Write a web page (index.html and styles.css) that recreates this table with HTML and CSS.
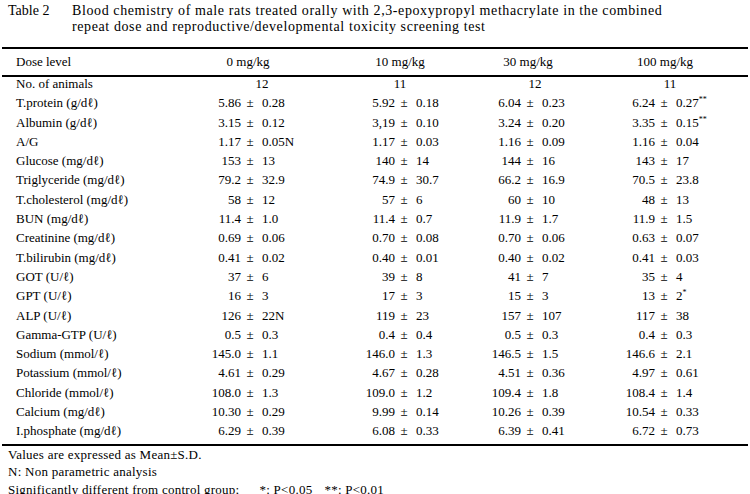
FILE: index.html
```html
<!DOCTYPE html>
<html>
<head>
<meta charset="utf-8">
<link rel="stylesheet" href="styles.css">
</head>
<body>
<div class="caption">
  <span class="tno">Table 2</span>
  <div class="ctext">Blood chemistry of male rats treated orally with 2,3-epoxypropyl methacrylate in the combined<br>repeat dose and reproductive/developmental toxicity screening test</div>
</div>
<table class="data">
  <colgroup>
    <col class="c-lbl">
    <col class="c1m"><col class="cpm"><col class="c1s">
    <col class="c2m"><col class="cpm"><col class="c2s">
    <col class="c3m"><col class="cpm"><col class="c3s">
    <col class="c4m"><col class="cpm"><col class="c4s">
  </colgroup>
  <thead>
    <tr>
      <th class="lbl">Dose level</th>
      <th colspan="3" class="h1">0 mg/kg</th>
      <th colspan="3">10 mg/kg</th>
      <th colspan="3" class="h3">30 mg/kg</th>
      <th colspan="3" class="h4">100 mg/kg</th>
    </tr>
  </thead>
  <tbody>
    <tr class="cnt"><td class="lbl">No. of animals</td><td colspan="3">12</td><td colspan="3">11</td><td colspan="3" class="n3">12</td><td colspan="3" class="n4">11</td></tr>
    <tr><td class="lbl">T.protein (g/dℓ)</td><td class="m">5.86</td><td class="pm">±</td><td class="s">0.28</td><td class="m">5.92</td><td class="pm">±</td><td class="s">0.18</td><td class="m">6.04</td><td class="pm">±</td><td class="s">0.23</td><td class="m">6.24</td><td class="pm">±</td><td class="s">0.27<sup>**</sup></td></tr>
    <tr><td class="lbl">Albumin (g/dℓ)</td><td class="m">3.15</td><td class="pm">±</td><td class="s">0.12</td><td class="m">3,19</td><td class="pm">±</td><td class="s">0.10</td><td class="m">3.24</td><td class="pm">±</td><td class="s">0.20</td><td class="m">3.35</td><td class="pm">±</td><td class="s">0.15<sup>**</sup></td></tr>
    <tr><td class="lbl">A/G</td><td class="m">1.17</td><td class="pm">±</td><td class="s">0.05N</td><td class="m">1.17</td><td class="pm">±</td><td class="s">0.03</td><td class="m">1.16</td><td class="pm">±</td><td class="s">0.09</td><td class="m">1.16</td><td class="pm">±</td><td class="s">0.04</td></tr>
    <tr><td class="lbl">Glucose (mg/dℓ)</td><td class="m">153</td><td class="pm">±</td><td class="s">13</td><td class="m">140</td><td class="pm">±</td><td class="s">14</td><td class="m">144</td><td class="pm">±</td><td class="s">16</td><td class="m">143</td><td class="pm">±</td><td class="s">17</td></tr>
    <tr><td class="lbl">Triglyceride (mg/dℓ)</td><td class="m">79.2</td><td class="pm">±</td><td class="s">32.9</td><td class="m">74.9</td><td class="pm">±</td><td class="s">30.7</td><td class="m">66.2</td><td class="pm">±</td><td class="s">16.9</td><td class="m">70.5</td><td class="pm">±</td><td class="s">23.8</td></tr>
    <tr><td class="lbl">T.cholesterol (mg/dℓ)</td><td class="m">58</td><td class="pm">±</td><td class="s">12</td><td class="m">57</td><td class="pm">±</td><td class="s">6</td><td class="m">60</td><td class="pm">±</td><td class="s">10</td><td class="m">48</td><td class="pm">±</td><td class="s">13</td></tr>
    <tr><td class="lbl">BUN (mg/dℓ)</td><td class="m">11.4</td><td class="pm">±</td><td class="s">1.0</td><td class="m">11.4</td><td class="pm">±</td><td class="s">0.7</td><td class="m">11.9</td><td class="pm">±</td><td class="s">1.7</td><td class="m">11.9</td><td class="pm">±</td><td class="s">1.5</td></tr>
    <tr><td class="lbl">Creatinine (mg/dℓ)</td><td class="m">0.69</td><td class="pm">±</td><td class="s">0.06</td><td class="m">0.70</td><td class="pm">±</td><td class="s">0.08</td><td class="m">0.70</td><td class="pm">±</td><td class="s">0.06</td><td class="m">0.63</td><td class="pm">±</td><td class="s">0.07</td></tr>
    <tr><td class="lbl">T.bilirubin (mg/dℓ)</td><td class="m">0.41</td><td class="pm">±</td><td class="s">0.02</td><td class="m">0.40</td><td class="pm">±</td><td class="s">0.01</td><td class="m">0.40</td><td class="pm">±</td><td class="s">0.02</td><td class="m">0.41</td><td class="pm">±</td><td class="s">0.03</td></tr>
    <tr><td class="lbl">GOT (U/ℓ)</td><td class="m">37</td><td class="pm">±</td><td class="s">6</td><td class="m">39</td><td class="pm">±</td><td class="s">8</td><td class="m">41</td><td class="pm">±</td><td class="s">7</td><td class="m">35</td><td class="pm">±</td><td class="s">4</td></tr>
    <tr><td class="lbl">GPT (U/ℓ)</td><td class="m">16</td><td class="pm">±</td><td class="s">3</td><td class="m">17</td><td class="pm">±</td><td class="s">3</td><td class="m">15</td><td class="pm">±</td><td class="s">3</td><td class="m">13</td><td class="pm">±</td><td class="s">2<sup>*</sup></td></tr>
    <tr><td class="lbl">ALP (U/ℓ)</td><td class="m">126</td><td class="pm">±</td><td class="s">22N</td><td class="m">119</td><td class="pm">±</td><td class="s">23</td><td class="m">157</td><td class="pm">±</td><td class="s">107</td><td class="m">117</td><td class="pm">±</td><td class="s">38</td></tr>
    <tr><td class="lbl">Gamma-GTP (U/ℓ)</td><td class="m">0.5</td><td class="pm">±</td><td class="s">0.3</td><td class="m">0.4</td><td class="pm">±</td><td class="s">0.4</td><td class="m">0.5</td><td class="pm">±</td><td class="s">0.3</td><td class="m">0.4</td><td class="pm">±</td><td class="s">0.3</td></tr>
    <tr><td class="lbl">Sodium (mmol/ℓ)</td><td class="m">145.0</td><td class="pm">±</td><td class="s">1.1</td><td class="m">146.0</td><td class="pm">±</td><td class="s">1.3</td><td class="m">146.5</td><td class="pm">±</td><td class="s">1.5</td><td class="m">146.6</td><td class="pm">±</td><td class="s">2.1</td></tr>
    <tr><td class="lbl">Potassium (mmol/ℓ)</td><td class="m">4.61</td><td class="pm">±</td><td class="s">0.29</td><td class="m">4.67</td><td class="pm">±</td><td class="s">0.28</td><td class="m">4.51</td><td class="pm">±</td><td class="s">0.36</td><td class="m">4.97</td><td class="pm">±</td><td class="s">0.61</td></tr>
    <tr><td class="lbl">Chloride (mmol/ℓ)</td><td class="m">108.0</td><td class="pm">±</td><td class="s">1.3</td><td class="m">109.0</td><td class="pm">±</td><td class="s">1.2</td><td class="m">109.4</td><td class="pm">±</td><td class="s">1.8</td><td class="m">108.4</td><td class="pm">±</td><td class="s">1.4</td></tr>
    <tr><td class="lbl">Calcium (mg/dℓ)</td><td class="m">10.30</td><td class="pm">±</td><td class="s">0.29</td><td class="m">9.99</td><td class="pm">±</td><td class="s">0.14</td><td class="m">10.26</td><td class="pm">±</td><td class="s">0.39</td><td class="m">10.54</td><td class="pm">±</td><td class="s">0.33</td></tr>
    <tr><td class="lbl">I.phosphate (mg/dℓ)</td><td class="m">6.29</td><td class="pm">±</td><td class="s">0.39</td><td class="m">6.08</td><td class="pm">±</td><td class="s">0.33</td><td class="m">6.39</td><td class="pm">±</td><td class="s">0.41</td><td class="m">6.72</td><td class="pm">±</td><td class="s">0.73</td></tr>
  </tbody>
</table>
<div class="notes">
  <p>Values are expressed as Mean±S.D.</p>
  <p>N: Non parametric analysis</p>
  <p>Significantly different from control group;<span class="sig1">*: P&lt;0.05</span><span class="sig2">**: P&lt;0.01</span></p>
</div>
</body>
</html>
```

FILE: styles.css
```css
body {
  margin: 0;
  background: #fff;
  color: #000;
  font-family: "Liberation Serif", "Times New Roman", serif;
}

.caption {
  display: flex;
  padding: 3px 0 0 8px;
  font-size: 14px;
  line-height: 16px;
}

.tno {
  flex: none;
  width: 64px;
}

.ctext {
  letter-spacing: 0.6px;
}

.data {
  margin: 12px 0 0 2px;
  width: 746px;
  border-collapse: collapse;
  table-layout: fixed;
  font-size: 13px;
}

.c-lbl { width: 188px; }
.cpm { width: 16px; }
.c1m { width: 52px; }
.c1s { width: 76px; }
.c2m { width: 62px; }
.c2s { width: 54px; }
.c3m { width: 56px; }
.c3s { width: 60px; }
.c4m { width: 58px; }
.c4s { width: 76px; }

.data thead th {
  border-top: 2px solid #000;
  border-bottom: 2px solid #000;
  height: 26px;
  padding: 0;
  font-weight: normal;
  text-align: center;
}

.data thead th.lbl,
.data td.lbl {
  text-align: left;
  padding-left: 14px;
}

.data thead th.h1 { padding-right: 28px; }
.data thead th.h3 { padding-right: 8px; }
.data thead th.h4 { padding-right: 16px; }

.data tbody td {
  height: 19.3px;
  line-height: 14px;
  padding: 0;
  vertical-align: top;
  white-space: nowrap;
}

.data tbody tr:last-child td {
  border-bottom: 2px solid #000;
}

.data tr.cnt td { text-align: center; }
.data tr.cnt td.lbl { text-align: left; }
.data tr.cnt td.n3 { padding-left: 6px; }
.data tr.cnt td.n4 { padding-right: 6px; }

.data td.m {
  text-align: right;
  padding-right: 1px;
}

.data td.pm {
  text-align: center;
}

.data td.s {
  text-align: left;
  padding-left: 4px;
}

.data sup {
  font-size: 8px;
  line-height: 0;
  vertical-align: 5px;
}

.notes {
  padding-left: 8px;
  font-size: 13px;
  line-height: 17.5px;
  letter-spacing: 0.25px;
}

.notes p {
  margin: 0;
}

.sig1 { margin-left: 20px; }
.sig2 { margin-left: 12px; }
```
